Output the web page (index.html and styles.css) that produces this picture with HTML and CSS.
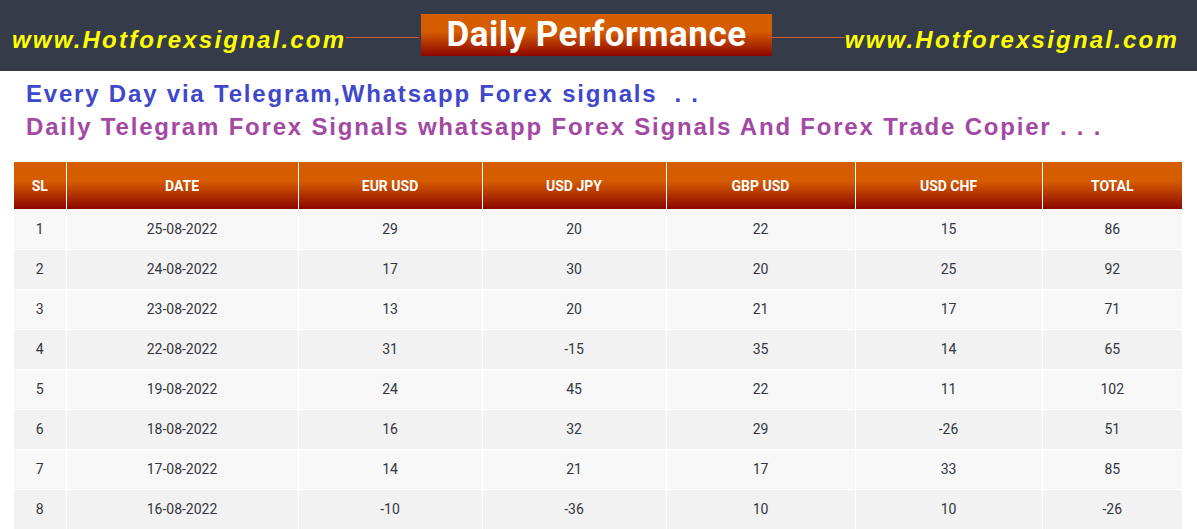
FILE: index.html
```html
<!DOCTYPE html>
<html lang="en">
<head>
<meta charset="utf-8">
<title>Daily Performance</title>
<link rel="stylesheet" href="styles.css">
</head>
<body>
<header class="topbar">
  <span class="site site-left">www.Hotforexsignal.com</span>
  <span class="rule"></span>
  <h1 class="title">Daily Performance</h1>
  <span class="rule"></span>
  <span class="site site-right">www.Hotforexsignal.com</span>
</header>
<section class="intro">
  <p class="line line-blue">Every Day via Telegram,Whatsapp Forex signals&nbsp; . .</p>
  <p class="line line-purple">Daily Telegram Forex Signals whatsapp Forex Signals And Forex Trade Copier . . .</p>
</section>
<table class="perf">
  <thead>
    <tr>
      <th class="c-sl">SL</th>
      <th class="c-date">DATE</th>
      <th class="c-eur">EUR USD</th>
      <th class="c-jpy">USD JPY</th>
      <th class="c-gbp">GBP USD</th>
      <th class="c-chf">USD CHF</th>
      <th class="c-total">TOTAL</th>
    </tr>
  </thead>
  <tbody>
    <tr><td>1</td><td>25-08-2022</td><td>29</td><td>20</td><td>22</td><td>15</td><td>86</td></tr>
    <tr><td>2</td><td>24-08-2022</td><td>17</td><td>30</td><td>20</td><td>25</td><td>92</td></tr>
    <tr><td>3</td><td>23-08-2022</td><td>13</td><td>20</td><td>21</td><td>17</td><td>71</td></tr>
    <tr><td>4</td><td>22-08-2022</td><td>31</td><td>-15</td><td>35</td><td>14</td><td>65</td></tr>
    <tr><td>5</td><td>19-08-2022</td><td>24</td><td>45</td><td>22</td><td>11</td><td>102</td></tr>
    <tr><td>6</td><td>18-08-2022</td><td>16</td><td>32</td><td>29</td><td>-26</td><td>51</td></tr>
    <tr><td>7</td><td>17-08-2022</td><td>14</td><td>21</td><td>17</td><td>33</td><td>85</td></tr>
    <tr><td>8</td><td>16-08-2022</td><td>-10</td><td>-36</td><td>10</td><td>10</td><td>-26</td></tr>
  </tbody>
</table>
</body>
</html>
```
FILE: styles.css
```css
html, body {
  margin: 0;
  padding: 0;
  background: #ffffff;
}

body {
  font-family: Roboto, "Liberation Sans", sans-serif;
  overflow: hidden;
}

.topbar {
  height: 71px;
  background: #363b4a;
  display: flex;
  align-items: flex-start;
  box-sizing: border-box;
}

.site {
  font-family: "Liberation Sans", Arial, sans-serif;
  font-weight: 700;
  font-style: italic;
  font-size: 24px;
  line-height: 24px;
  letter-spacing: 2.2px;
  color: #ffff00;
  margin-top: 28px;
  white-space: nowrap;
}

.site-left {
  padding-left: 12px;
}

.site-right {
  padding-right: 18px;
}

.rule {
  flex: 1;
  height: 1px;
  margin-top: 37px;
  background: #c9602c;
}

.title {
  margin: 14px 0 0 2px;
  width: 351px;
  height: 42px;
  box-sizing: border-box;
  text-align: center;
  font-family: Roboto, sans-serif;
  font-weight: 700;
  font-size: 35px;
  line-height: 42px;
  letter-spacing: 0.5px;
  color: #ffffff;
  background: linear-gradient(to bottom, #d65c00 0%, #d65c00 42%, #8c0600 100%);
}

.intro {
  padding: 6px 0 0 26px;
  margin-bottom: 19px;
}

.line {
  margin: 0;
  font-family: "Liberation Sans", Arial, sans-serif;
  font-weight: 700;
  font-size: 24px;
  line-height: 33px;
  letter-spacing: 1.8px;
  white-space: nowrap;
}

.line-blue {
  color: #3f48cc;
}

.line-purple {
  color: #a349a4;
}

.perf {
  margin-left: 14px;
  width: 1168px;
  table-layout: fixed;
  border-collapse: collapse;
  font-family: Roboto, sans-serif;
}

.perf th {
  height: 47px;
  padding: 0;
  box-sizing: border-box;
  border-left: 1px solid #ffffff;
  border-right: 1px solid #ffffff;
  color: #ffffff;
  font-weight: 700;
  font-size: 14px;
  text-align: center;
  background: linear-gradient(to bottom, #d65c00 0%, #d65c00 40%, #8c0600 100%);
}

.perf th:first-child,
.perf td:first-child {
  border-left: none;
}

.perf th:last-child,
.perf td:last-child {
  border-right: none;
}

.c-sl { width: 52px; }
.c-date { width: 232px; }
.c-eur { width: 184px; }
.c-jpy { width: 184px; }
.c-gbp { width: 189px; }
.c-chf { width: 187px; }
.c-total { width: 140px; }

.perf td {
  height: 40px;
  padding: 0;
  box-sizing: border-box;
  border: 1px solid #ffffff;
  text-align: center;
  font-size: 14px;
  color: #333640;
}

.perf tbody tr:nth-child(odd) td {
  background: #f8f8f8;
}

.perf tbody tr:nth-child(even) td {
  background: #f2f2f2;
}

.perf tbody tr:first-child td {
  border-top: none;
}
```
